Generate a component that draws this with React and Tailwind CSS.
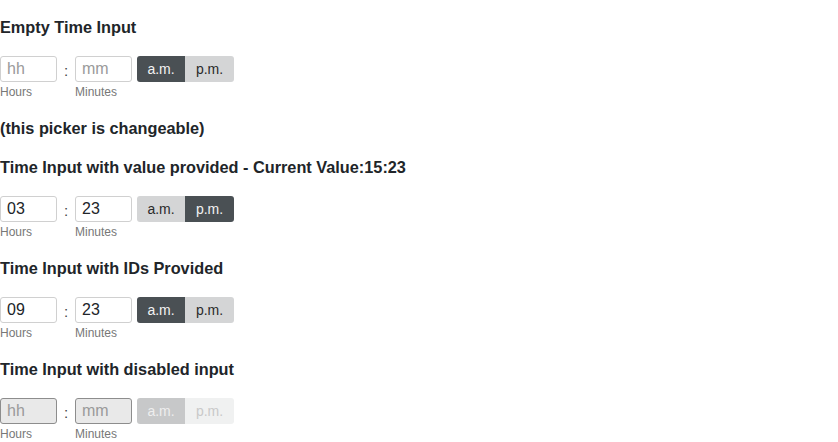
import React, { useState } from "react";

const TimeInput = ({ hours = "", minutes = "", period = "am", disabled = false, onChange }) => {
  const inputClass = disabled
    ? "w-[57px] h-[26px] px-[6px] border border-[#8d8d8d] rounded-[3px] bg-[#e9e9e9] text-[16px] text-[#212529] placeholder:text-[#9a9a9a] outline-none"
    : "w-[57px] h-[26px] px-[6px] border border-[#d0d0d0] rounded-[3px] bg-white text-[16px] text-[#212529] placeholder:text-[#9a9a9a] outline-none";

  const btnClass = (active) => {
    if (disabled) {
      return active
        ? "h-[26px] bg-[#c7c8c9] text-[#eeeeee]"
        : "h-[26px] bg-[#f0f1f1] text-[#c9c9c9]";
    }
    return active
      ? "h-[26px] bg-[#4a5054] text-[#f2f2f2]"
      : "h-[26px] bg-[#d4d5d6] text-[#2a2a2a]";
  };

  return (
    <div className="flex items-start">
      <div className="flex flex-col">
        <input
          className={inputClass}
          placeholder="hh"
          value={hours}
          disabled={disabled}
          onChange={(e) => onChange && onChange({ hours: e.target.value })}
        />
        <span className="mt-[2px] text-[12px] leading-4 text-[#777]">Hours</span>
      </div>
      <span className="w-[18px] h-[26px] pt-[4px] text-center text-[15px] leading-[22px] text-[#444]">:</span>
      <div className="flex flex-col">
        <input
          className={inputClass}
          placeholder="mm"
          value={minutes}
          disabled={disabled}
          onChange={(e) => onChange && onChange({ minutes: e.target.value })}
        />
        <span className="mt-[2px] text-[12px] leading-4 text-[#777]">Minutes</span>
      </div>
      <div className="ml-[5px] flex rounded-[3px] overflow-hidden text-[14px]">
        <button
          disabled={disabled}
          onClick={() => onChange && onChange({ period: "am" })}
          className={"w-[48px] " + btnClass(period === "am")}
        >
          a.m.
        </button>
        <button
          disabled={disabled}
          onClick={() => onChange && onChange({ period: "pm" })}
          className={"w-[49px] " + btnClass(period === "pm")}
        >
          p.m.
        </button>
      </div>
    </div>
  );
};

const Heading = ({ children, className = "" }) => (
  <h4 className={"text-[16.3px] leading-6 font-bold text-[#212529] " + className}>{children}</h4>
);

const App = () => {
  const [first, setFirst] = useState({ hours: "", minutes: "", period: "am" });
  const [second, setSecond] = useState({ hours: "03", minutes: "23", period: "pm" });

  const toValue = (t) => {
    const h = parseInt(t.hours || "0", 10) % 12 + (t.period === "pm" ? 12 : 0);
    return `${h}:${t.minutes}`;
  };

  return (
    <div
      className="pt-[15px] bg-white min-h-screen"
      style={{ fontFamily: '"Liberation Sans", Arial, sans-serif' }}
    >
      <Heading className="mb-[17px]">Empty Time Input</Heading>
      <TimeInput {...first} onChange={(v) => setFirst({ ...first, ...v })} />

      <Heading className="mt-[16px] mb-[15px]">(this picker is changeable)</Heading>
      <Heading className="mb-[17px]">
        Time Input with value provided - Current Value:{toValue(second)}
      </Heading>
      <TimeInput {...second} onChange={(v) => setSecond({ ...second, ...v })} />

      <Heading className="mt-[16px] mb-[17px]">Time Input with IDs Provided</Heading>
      <TimeInput hours="09" minutes="23" period="am" />

      <Heading className="mt-[16px] mb-[17px]">Time Input with disabled input</Heading>
      <TimeInput disabled period="am" />
    </div>
  );
};

export default App;
